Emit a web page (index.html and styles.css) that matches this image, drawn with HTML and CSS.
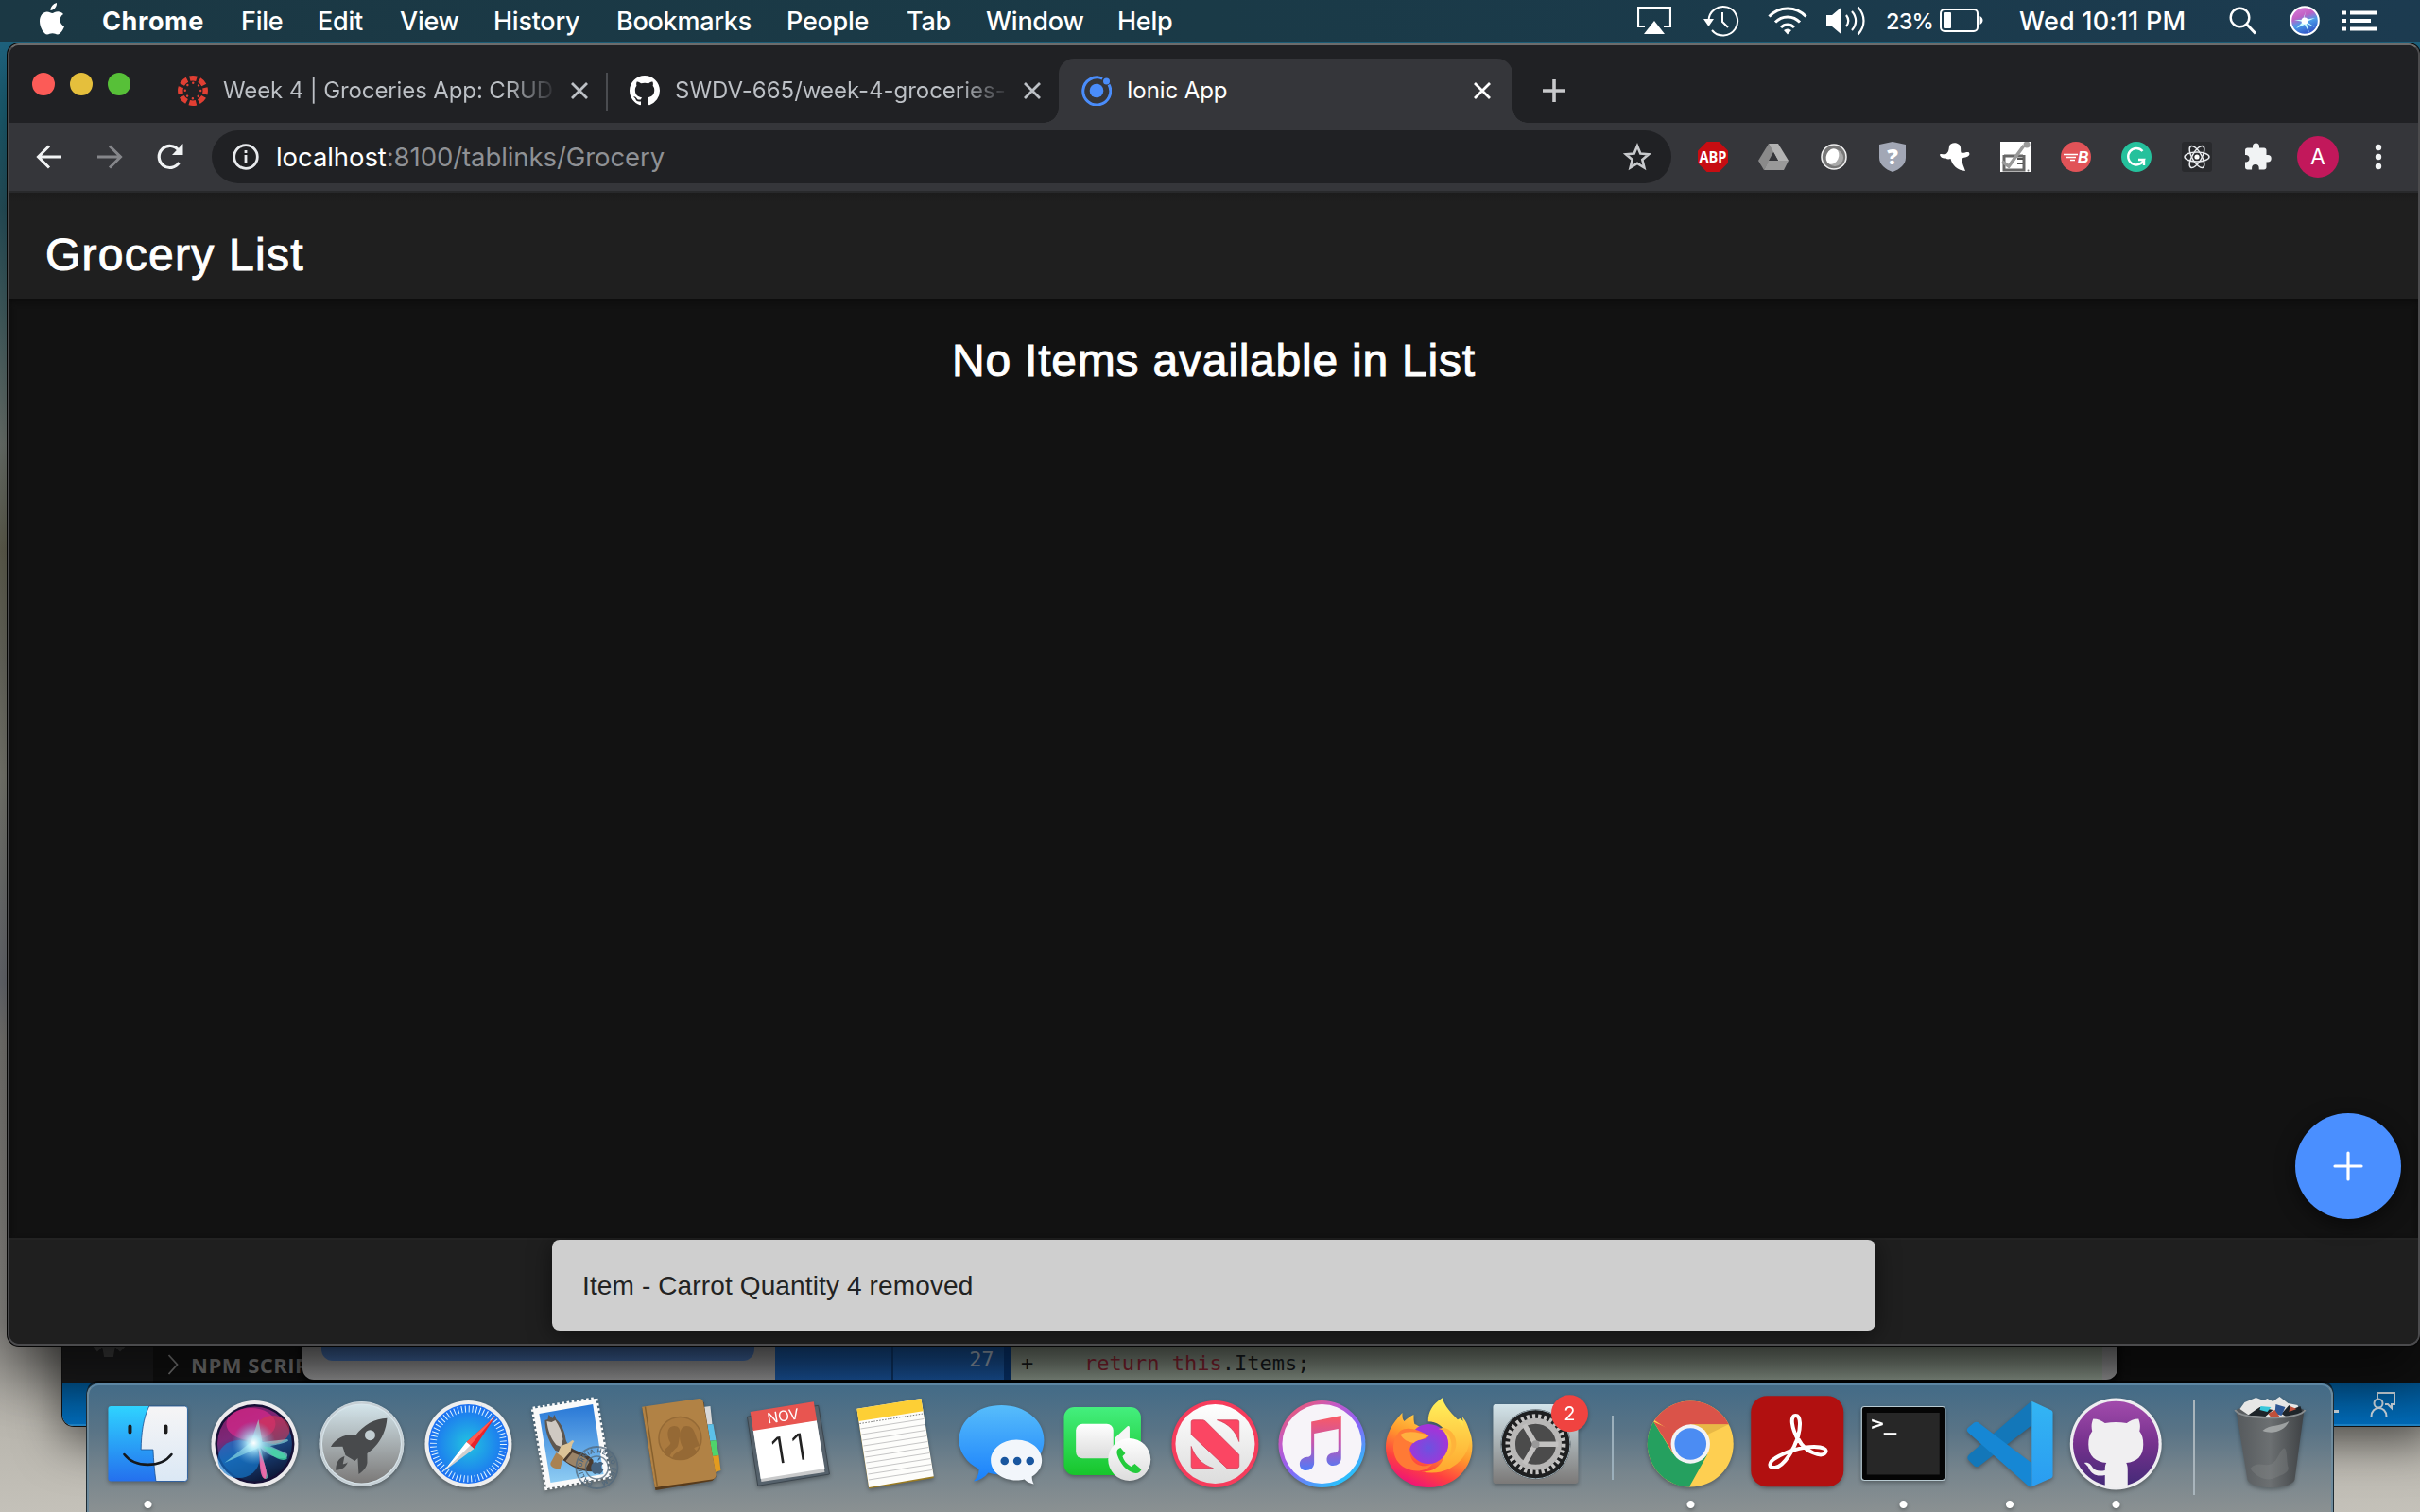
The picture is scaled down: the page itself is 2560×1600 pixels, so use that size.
FILE: index.html
```html
<!DOCTYPE html>
<html lang="en">
<head>
<meta charset="utf-8">
<title>Ionic App</title>
<link rel="stylesheet" href="styles.css">
</head>
<body>
<div class="desktop">

  <section class="window editor">
    <div class="editor-body">
      <div class="activity"><svg width="36" height="14" viewBox="0 0 36 14"><path d="M2 0l4 5 5-5M12 0l2 11h8l2-11M25 0l5 5 5-5" fill="#3a3a3a" stroke="#3a3a3a" stroke-width="2"/></svg></div>
      <div class="npm"><svg width="12" height="22" viewBox="0 0 12 22"><path d="M1.500 1l9 10-9 10" fill="none" stroke="#777" stroke-width="1.800"/></svg><span>NPM SCRIPTS</span></div>
    </div>
    <div class="editor-status"><i></i><svg width="28" height="28" viewBox="0 0 28 28" fill="none" stroke="#c3cdd4" stroke-width="2"><path d="M8 8V2h18v12h-3v4l-4-4h-3"/><circle cx="9" cy="13" r="4.500"/><path d="M1.500 27c0-12 16-12 16 0"/></svg></div>
  </section>

  <section class="window diff">
    <div class="side"><div class="button"></div></div>
    <div class="gutter"></div>
    <div class="gutter num">27</div>
    <div class="code"><span class="plus">+</span><span class="src"><b>return</b> <b>this</b>.Items;</span></div>
  </section>

  <main class="window browser">
    <div class="tabs">
      <div class="lights"><i class="red"></i><i class="yellow"></i><i class="green"></i></div>
      <div class="tab first">
        <svg width="32" height="32" viewBox="0 0 32 32"><circle cx="16" cy="16" r="13.200" fill="none" stroke="#e13f33" stroke-width="5.500" stroke-dasharray="7.400 2.967" stroke-dashoffset="3.700"/><circle cx="16" cy="16" r="8.200" fill="none" stroke="#e13f33" stroke-width="2.400" stroke-linecap="round" stroke-dasharray="0.100 6.340"/></svg>
        <span class="name t1">Week 4 | Groceries App: CRUD</span>
        <svg class="x" width="24" height="24" viewBox="0 0 24 24"><path d="M4 4l16 16M20 4L4 20"/></svg>
      </div>
      <div class="tab second">
        <svg width="32" height="32" viewBox="0 0 16 16"><path fill="#fff" d="M8 0C3.580 0 0 3.580 0 8c0 3.540 2.290 6.530 5.470 7.590.4.070.55-.17.55-.38 0-.19-.01-.82-.01-1.490-2.010.37-2.530-.49-2.690-.94-.09-.23-.48-.94-.82-1.130-.28-.15-.68-.52-.01-.53.63-.01 1.080.58 1.230.82.72 1.210 1.870.87 2.330.66.07-.52.28-.87.51-1.070-1.780-.2-3.640-.89-3.640-3.950 0-.87.31-1.590.82-2.150-.08-.2-.36-1.020.08-2.120 0 0 .67-.21 2.200.82.64-.18 1.320-.27 2-.27s1.360.09 2 .27c1.530-1.040 2.200-.82 2.200-.82.44 1.100.16 1.920.08 2.120.51.56.82 1.270.82 2.150 0 3.070-1.870 3.750-3.650 3.950.29.25.54.73.54 1.480 0 1.070-.01 1.930-.01 2.200 0 .21.15.46.55.38A8.010 8.010 0 0 0 16 8c0-4.420-3.580-8-8-8z"/></svg>
        <span class="name t2">SWDV-665/week-4-groceries-</span>
        <svg class="x" width="24" height="24" viewBox="0 0 24 24"><path d="M4 4l16 16M20 4L4 20"/></svg>
      </div>
      <div class="tab active">
        <svg width="32" height="32" viewBox="0 0 32 32" fill="#4a8dfb"><circle cx="16" cy="16" r="7.300"/><path d="M22.200 3.200A14.500 14.500 0 1 0 29 9.500" fill="none" stroke="#4a8dfb" stroke-width="3"/><circle cx="26.500" cy="6" r="3.500"/></svg>
        <span class="name t3">Ionic App</span>
        <svg class="x" width="24" height="24" viewBox="0 0 24 24"><path d="M4 4l16 16M20 4L4 20"/></svg>
      </div>
      <svg class="newtab" width="28" height="28" viewBox="0 0 28 28"><path d="M14 2v24M2 14h24" stroke="#c8c9cb" stroke-width="3.600"/></svg>
    </div>

    <div class="toolbar">
      <svg width="28" height="28" viewBox="0 0 28 28" fill="none" stroke="#f1f3f4" stroke-width="3"><path d="M27 14H3M14 2.500L2.500 14 14 25.500"/></svg>
      <svg width="28" height="28" viewBox="0 0 28 28" fill="none" stroke="#85868a" stroke-width="3"><path d="M1 14h24M14 2.500L25.500 14 14 25.500"/></svg>
      <svg width="28" height="28" viewBox="0 0 28 28"><path d="M23.500 20A11.500 11.500 0 1 1 23 7.200" fill="none" stroke="#f1f3f4" stroke-width="3.200"/><path d="M27.500 0v12H16z" fill="#f1f3f4"/></svg>
      <div class="omnibox">
        <svg width="28" height="28" viewBox="0 0 28 28"><circle cx="14" cy="14" r="12.300" fill="none" stroke="#e8eaed" stroke-width="2.800"/><path d="M14 12v9M14 7v3" stroke="#e8eaed" stroke-width="2.800"/></svg>
        <span class="url"><b>localhost</b>:8100/tablinks/Grocery</span>
        <svg class="star" width="30" height="30" viewBox="0 0 30 30"><path d="M15 3.500l3.300 8.100 8.700.7-6.700 5.700 2.100 8.500L15 21.900l-7.400 4.600 2.100-8.500L3 12.300l8.700-.7z" fill="none" stroke="#c8cacd" stroke-width="2.600"/></svg>
      </div>
      <div class="extensions">
        <svg viewBox="0 0 32 32"><path d="M9.500 0h13L32 9.500v13L22.500 32h-13L0 22.500v-13z" fill="#c70d12"/><text x="16" y="21.500" text-anchor="middle" class="abp" textLength="29" lengthAdjust="spacingAndGlyphs">ABP</text></svg>
        <svg viewBox="0 0 32 32"><path d="M11 2l5.500 9L6 30 0 20z" fill="#8a8a8a"/><path d="M11 2h10l11 18H21z" fill="#b3b3b3"/><path d="M11 20h21l-5 10H6z" fill="#999"/><path d="M16 11l5 9H11z" fill="#35363a"/></svg>
        <svg viewBox="0 0 32 32"><circle cx="16" cy="16" r="13" fill="#777" stroke="#eee" stroke-width="1.600"/><circle cx="17" cy="17" r="9" fill="#aaa"/><ellipse cx="14.500" cy="15.500" rx="6.500" ry="8.500" transform="rotate(25 14.500 15.500)" fill="#fff"/></svg>
        <svg viewBox="0 0 32 32"><path d="M14 0l14 3v14c0 7-6 12-14 15C6 29 0 24 0 17V3z" fill="#a2a7b5"/><text x="14" y="24" text-anchor="middle" class="q">?</text></svg>
        <svg viewBox="0 0 32 32"><path d="M10 5c1-5 11-5 12 1 .3 2 0 4 .5 5.500 3 .8 5-1 8-.5 2 2 .5 4-2 5-2 .8-4 .6-5 2-.5 4 2 8 3.500 13-8-.5-14-6-15.500-13-2 .8-4 .5-5-.5-3 .5-6.500-1.500-6.500-4 2-1.500 4 .5 6.500-.5C9.500 11 9.500 8 10 5z" fill="#fff"/></svg>
        <svg viewBox="0 0 32 32"><path fill="#fff" d="M0 0h32v32H0z"/><path d="M4 15h20M4 14v16h21V14" fill="none" stroke="#666" stroke-width="3"/><path d="M18 18h6M18 23h6" stroke="#555" stroke-width="2"/><path d="M2 21l7 5L25 4" fill="none" stroke="#999" stroke-width="3.500"/><circle cx="28" cy="3" r="3.500" fill="#999"/><circle cx="29.500" cy="30.500" r="1" fill="#777"/></svg>
        <svg viewBox="0 0 32 32"><circle cx="16" cy="16" r="16" fill="#e15358"/><path d="M3 13.500h15M6 16.500h10M10 19.500h5" stroke="#fff" stroke-width="1.700"/><text x="18" y="22" class="bee">B</text></svg>
        <svg viewBox="0 0 32 32"><circle cx="16" cy="16" r="16" fill="#25c19c"/><path d="M22.500 10A8.700 8.700 0 1 0 24 19h-6M24 18v7" fill="none" stroke="#fff" stroke-width="2.400"/></svg>
        <svg viewBox="0 0 32 32"><rect width="32" height="32" rx="3" fill="#292a2d"/><g fill="none" stroke="#e8eaed" stroke-width="1.500"><ellipse cx="16" cy="16" rx="13" ry="5"/><ellipse cx="16" cy="16" rx="13" ry="5" transform="rotate(60 16 16)"/><ellipse cx="16" cy="16" rx="13" ry="5" transform="rotate(120 16 16)"/></g><circle cx="16" cy="16" r="2.600" fill="#fff"/></svg>
        <svg viewBox="0 0 32 32"><path d="M3 9c0-1.500 1-2.500 2.500-2.500H11V5a3.500 3.500 0 0 1 7 0v1.500h5c1.500 0 2.500 1 2.500 2.500v5H27a3.700 3.700 0 0 1 0 7.400h-1.500v5.500c0 1.500-1 2.500-2.500 2.500h-5.300v-1.500a3.800 3.800 0 0 0-7.600 0v1.500H5.500C4 29.400 3 28.400 3 27v-5.500h1.300a3.800 3.800 0 0 0 0-7.500H3z" fill="#f1f3f4"/></svg>
        <span class="avatar">A</span>
        <svg viewBox="0 0 32 32" fill="#f1f3f4"><circle cx="16" cy="6" r="3.200"/><circle cx="16" cy="16" r="3.200"/><circle cx="16" cy="26" r="3.200"/></svg>
      </div>
    </div>

    <header class="app-header"><h1>Grocery List</h1></header>
    <div class="app-content">
      <h2>No Items available in List</h2>
      <button class="fab"><svg width="32" height="32" viewBox="0 0 32 32"><path d="M16 2v28M2 16h28" stroke="#fff" stroke-width="3.200" stroke-linecap="round"/></svg></button>
    </div>
    <footer class="app-footer"><div class="toast"><span>Item - Carrot Quantity 4 removed</span></div></footer>
  </main>

  <nav class="menubar">
    <svg class="apple" width="26" height="34" viewBox="0 0 26 34" fill="#fff"><path d="M18 0c.4 4-3 8-6.500 8C11 4.500 14.500.8 18 0zM25 12c-5 3-4.500 10.500 1 13-1.300 4-4.500 8.500-7 8.500-2 0-3-1.200-5.500-1.200S10 33.500 8 33.500C4.500 33.500 0 26 0 19.500 0 13 4 9.500 7.800 9.500c2.300 0 4.200 1.500 5.500 1.500s3.300-1.700 6-1.700c2.200 0 4.300 1 5.700 2.700z"/></svg>
    <b>Chrome</b><span>File</span><span>Edit</span><span>View</span><span>History</span><span>Bookmarks</span><span>People</span><span>Tab</span><span>Window</span><span>Help</span>
    <svg width="36" height="30" viewBox="0 0 36 30"><path d="M8 21H1V1h34v20h-7" fill="none" stroke="#fff" stroke-width="2.200"/><path d="M18 15l11 14H7z" fill="#fff"/></svg>
    <svg width="38" height="34" viewBox="0 0 38 34"><path d="M5.500 17A15.300 15.300 0 1 1 9 27" fill="none" stroke="#fff" stroke-width="2"/><path d="M0 15h11l-5.500 8z" fill="#fff"/><path d="M20 8v10l6 6" fill="none" stroke="#fff" stroke-width="2"/></svg>
    <svg width="42" height="30" viewBox="0 0 42 30" fill="none" stroke="#fff" stroke-width="3"><path d="M1.500 10.500C12-1 30-1 40.500 10.500M8 16.500c7-7.500 19-7.500 26 0M14 22c4-4 10-4 14 0"/><path d="M21 29.500l-4-4.500c2.500-2 5.500-2 8 0z" fill="#fff" stroke="none"/></svg>
    <svg width="42" height="32" viewBox="0 0 42 32"><path d="M0 10h6l10-8.500v29L6 22H0z" fill="#fff"/><path d="M21 10c3 4 3 8 0 12M27 6c5.500 6 5.500 14 0 20M33.500 1.500c8 9 8 20 0 29" fill="none" stroke="#fff" stroke-width="2.200"/></svg>
    <span class="percent">23%</span>
    <svg width="47" height="26" viewBox="0 0 47 26"><rect x="1" y="1" width="39" height="23" rx="4" fill="none" stroke="#fff" stroke-width="2"/><rect x="4" y="4" width="8" height="17" rx="1" fill="#fff"/><path d="M42.500 8c4 2 4 7 0 9z" fill="#fff"/></svg>
    <span class="clock">Wed 10:11 PM</span>
    <svg width="30" height="30" viewBox="0 0 30 30" fill="none" stroke="#fff"><circle cx="11.500" cy="11.500" r="9.800" stroke-width="2.400"/><path d="M18.500 18.500L28 28.500" stroke-width="3"/></svg>
    <svg width="32" height="32" viewBox="0 0 32 32"><defs><linearGradient id="orb" x1=".2" x2=".6" y2="1"><stop stop-color="#d77bd8"/><stop offset=".35" stop-color="#c060c4"/><stop offset=".6" stop-color="#4a9be8"/><stop offset="1" stop-color="#2d4dc4"/></linearGradient></defs><circle cx="16" cy="16" r="14.800" fill="url(#orb)" stroke="#fff" stroke-width="2"/><path d="M15 15l12-2-9 4 9 6-9-4 3 10-5-9-9 4 7-7-9-2 9 0 3-9z" fill="#c8fbff"/><circle cx="16" cy="16" r="3.500" fill="#fff"/></svg>
    <svg width="36" height="22" viewBox="0 0 36 22"><path d="M0 2.500h4M8 2.500h28M0 11h4M8 11h22M0 19.500h4M8 19.500h28" stroke="#fff" stroke-width="4"/></svg>
  </nav>

  <div class="dock">
    <svg class="app running" viewBox="0 0 112 136">
      <defs>
        <linearGradient id="finA" x2="0" y2="1"><stop stop-color="#2fd3ff"/><stop offset="1" stop-color="#2470ee"/></linearGradient>
        <linearGradient id="finB" x2="0" y2="1"><stop stop-color="#f6f5f6"/><stop offset="1" stop-color="#dbe8f5"/></linearGradient>
        <linearGradient id="grey" x2="0" y2="1"><stop stop-color="#d3e4ea"/><stop offset="1" stop-color="#7b7978"/></linearGradient>
        <radialGradient id="saf"><stop stop-color="#22c3e0"/><stop offset="1" stop-color="#1c6ff2"/></radialGradient>
        <linearGradient id="sky" x2="0" y2="1"><stop stop-color="#2877d6"/><stop offset="1" stop-color="#8fcdf3"/></linearGradient>
        <linearGradient id="msg" x2="0" y2="1"><stop stop-color="#57bdfb"/><stop offset="1" stop-color="#1a80fb"/></linearGradient>
        <linearGradient id="ft" x2="0" y2="1"><stop stop-color="#44ef7e"/><stop offset="1" stop-color="#17c52b"/></linearGradient>
        <linearGradient id="pale" x2="0" y2="1"><stop stop-color="#fff"/><stop offset="1" stop-color="#dcdcdc"/></linearGradient>
        <linearGradient id="mus" x2=".7" y2="1"><stop stop-color="#ff5a4c"/><stop offset=".35" stop-color="#c259c9"/><stop offset=".6" stop-color="#8b62f8"/><stop offset="1" stop-color="#22c7fc"/></linearGradient>
        <linearGradient id="note" x2="0" y2="1"><stop stop-color="#fb5a62"/><stop offset=".5" stop-color="#c455b0"/><stop offset="1" stop-color="#4d7bfa"/></linearGradient>
        <linearGradient id="fox" x1=".8" x2=".3" y2="1"><stop stop-color="#fff058"/><stop offset=".45" stop-color="#ff9a2c"/><stop offset=".75" stop-color="#ff4040"/><stop offset="1" stop-color="#ec0f7d"/></linearGradient>
        <linearGradient id="foxy" x2="0" y2="1"><stop stop-color="#fff25c"/><stop offset="1" stop-color="#ffa52e"/></linearGradient>
        <radialGradient id="globe" cx=".5" cy=".6"><stop stop-color="#6b53e0"/><stop offset="1" stop-color="#a235d8"/></radialGradient>
        <linearGradient id="vs" x2="0" y2="1"><stop stop-color="#33b5f4"/><stop offset="1" stop-color="#2a9cf0"/></linearGradient>
        <linearGradient id="git" x2="0" y2="1"><stop stop-color="#a24bac"/><stop offset=".5" stop-color="#75318d"/><stop offset="1" stop-color="#432a77"/></linearGradient>
        <linearGradient id="can"><stop stop-color="#55595c"/><stop offset=".5" stop-color="#6c7072"/><stop offset="1" stop-color="#3e4144"/></linearGradient>
      </defs>
      <rect x="14" y="24" width="84" height="79.500" rx="3" fill="url(#finA)"/><path d="M57.300 24H95a3 3 0 0 1 3 3v73.500a3 3 0 0 1-3 3H64.500c-1.500-11-2.500-22-3-33.500H48.700C49 53 51 37 57.300 24z" fill="url(#finB)" stroke="#1b4f8f" stroke-width=".8"/><path d="M37 45.500v6M75 45.500v6" stroke="#1b1b1b" stroke-width="4" stroke-linecap="round"/><path d="M31 75c11 14.500 39 14.500 50 0" fill="none" stroke="#15181c" stroke-width="2.600" stroke-linecap="round"/>
    </svg>
    <svg class="app" viewBox="0 0 112 136"><defs>
      <linearGradient id="sb" x1=".2" x2=".6" y2="1"><stop stop-color="#7b1c63"/><stop offset=".35" stop-color="#7c2878"/><stop offset=".6" stop-color="#1c4a86"/><stop offset="1" stop-color="#0d1838"/></linearGradient>
      <radialGradient id="glow"><stop stop-color="#fff"/><stop offset=".3" stop-color="#bdf4ff" stop-opacity=".85"/><stop offset="1" stop-color="#6ad" stop-opacity="0"/></radialGradient></defs>
      <circle cx="56" cy="64" r="46" fill="#eceaec"/><circle cx="56" cy="64" r="42" fill="#161036"/><circle cx="56" cy="64" r="39.500" fill="url(#sb)"/><ellipse cx="52" cy="43" rx="26" ry="17" fill="#e22a8e" opacity=".65"/><ellipse cx="75" cy="49" rx="18" ry="15" fill="#d23750" opacity=".6"/><ellipse cx="39" cy="80" rx="22" ry="20" fill="#1479cf" opacity=".65"/><path d="M24 84L52 62l8-24 4 24 26-3c8 3-18 7-18 7l18 8c5 8-16 7-28-6l8 31c-6 10-8-20-10-31z" fill="#a5f5e9" opacity=".55"/><path d="M60 67c3 12 12 26 7 34-7-2-5-22-7-34z" fill="#f767ab" opacity=".9"/><path d="M64 66c14 2 28 9 26 14-8 4-19-6-26-14z" fill="#44dba5" opacity=".8"/><circle cx="55" cy="63" r="23" fill="url(#glow)"/>
    </svg>
    <svg class="app" viewBox="0 0 112 136"><circle cx="56" cy="64" r="45" fill="#d9e6ec"/><circle cx="56" cy="64" r="41.500" fill="url(#grey)"/><circle cx="56" cy="64" r="43.500" fill="none" stroke="#b9c0c4" stroke-width="2" opacity=".6"/><path d="M83 36.700C70 37 58 44 50 54.500c-10-2-21 3-26.500 12.500L36 66.700l3 9.300 10 6 3-3 1 17c6-4 8.500-8 9-12v-10c12-8 20-22 21-37.300z" fill="#484a4c"/><circle cx="65" cy="54.700" r="5.500" fill="#c3ced2"/><path d="M38 77c-7 2-9 8-9.300 14.700 6 0 11-3 12.600-8.400-2 2-5 2-5 2z" fill="#484a4c"/></svg>
    <svg class="app" viewBox="0 0 112 136"><circle cx="56" cy="64" r="46" fill="#eee"/><circle cx="56" cy="64" r="42" fill="url(#saf)"/><circle cx="56" cy="64" r="37" fill="none" stroke="#e2f5ff" stroke-width="7" stroke-dasharray="1 2.875"/><path d="M84.500 35L62 69l-8-7z" fill="#e8232b"/><path d="M84.500 35L54 62l4 3.500z" fill="#ff5b50"/><path d="M30 93l32-24-8-7z" fill="#cfcfcf"/><path d="M30 93l24-31 4 3.500z" fill="#fff"/></svg>
    <svg class="app" viewBox="0 0 112 136"><path d="M11.300 26.700L78 16l14.300 82.700-66.600 12.300z" fill="#fafafa" stroke="#fafafa" stroke-width="4" stroke-dasharray="2.600 2.600"/><path d="M18 32l56.700-10L86 96l-56 9z" fill="url(#sky)"/>
      <path d="M24 39l3-1 1-5 4 4 2-4 2 5c6 5 9 13 10 21 1 4 3 6 7 7l-12 7-6-2C29 63 24 51 24 39z" fill="#5e5750"/><path d="M26 40l5 1 4-2c4 6 7 12 8 20l-2 8-5-2C30 58 27 49 26 40z" fill="#cfc9c2"/><path d="M52 68c6 5 16 5 23 13l1 12c-12 1-23-4-33-12z" fill="#4a3b2f"/><path d="M53 73c7 3 13 4 18 10l-4 7c-9-1-16-4-21-8z" fill="#9b8468"/><path d="M41 66l8-3 4-3 2 1-2 3-2 8-8 9-7-3z" fill="#dcc397"/><path d="M36 73l8 6c-2 4-3 8-4 12-6-1-11-3-10-7z" fill="#a98252"/>
      <g fill="none" stroke="#52687b" opacity=".75"><circle cx="79" cy="89" r="22" stroke-width="1.800"/><circle cx="79" cy="89" r="12" stroke-width="1.500"/><path id="ring" stroke="none" d="M79 104.500a15.500 15.500 0 1 1 .1 0"/></g><text class="stamp" textLength="88"><textPath href="#ring" startOffset="4">CALIFORNIA HELLO FROM</textPath></text><path d="M80 82c2-1 3-3 3-4-2 0-3 2-3 4zm-6 3c-3 5 0 10 3 11 2-1 3-1 5 0 2-1 3-3 4-5-3-1-3-5 0-6-2-3-5-2-6-1-2-1-4-1-6 1z" fill="#45627f"/></svg>
    <svg class="app" viewBox="0 0 112 136"><path d="M79 25l8-1 2 19-7 1z" fill="#d8d8d8"/><path d="M82 44l8-1 3 17-8 1z" fill="#5cc0e8"/><path d="M86 61l7-1 3 16-7 1z" fill="#4fd46b"/><path d="M89 77l7-1 2 16-6 2z" fill="#e39b1f"/><path d="M15 26l61-9 4 3 13 79-4 4-60 10z" fill="#573a1b"/><path d="M14.700 24.700L75 16c3 0 4 1 4.500 4L93 96c0 3-1 5-4 5.500L28.300 110z" fill="#b18245"/><path d="M18 24.500l13 85" stroke="#86602e" stroke-width="1.500"/><circle cx="55" cy="58" r="22.500" fill="#aa7a3f" stroke="#956a36" stroke-width="1.500"/><path d="M38 73c0-5 6-6 7-10-5-8-4-18 4-18 6 0 7 6 5 14-1 6-1 8-4 10-3 3-6 6-6 9-3-1-5-3-6-5z" fill="#956935"/><path d="M47 79c0-6 9-7 11-11-5-8-5-23 4-23 9 0 9 12 14 21-3 1-6 1-6 3 2 2 3 3 3 4-6 7-18 9-26 6z" fill="#956935"/></svg>
    <svg class="app" viewBox="0 0 112 136"><path d="M13 35.300l75.300-12L100 96l-75.700 12.300z" fill="#56626c" stroke="#3c464e"/><path d="M19.300 49l67-10L95 94l-67 10z" fill="#c9cacb"/><path d="M19.300 49l67-10L95 90l-67.700 11z" fill="#fff"/><path d="M16.300 30l67-10.700 3.400 20-67.400 10.700z" fill="#e85550"/><text class="month" x="51" y="40" transform="rotate(-9 51 35)" text-anchor="middle">NOV</text><text class="day" x="57" y="83" transform="rotate(-9 57 69)" text-anchor="middle" textLength="37">11</text></svg>
    <svg class="app" viewBox="0 0 112 136"><path d="M16 27.700l68-10.700 13.300 83-68.600 11.300z" fill="#9a7b22"/><path d="M16 26.700L84 16l13.300 82.300L28.700 110z" fill="#fdfdfb"/><path d="M16 26.700L84 16l2 13.300L18 40z" fill="#fdcf35"/><path d="M19 42.500l67-10.500" stroke="#777" stroke-dasharray="1.500 1.500"/><path d="M20 48l67-10.500M21 54l67-10.500M22 60l67-10.500M23 66l67-10.500M24 72l67-10.500M25 78l67-10.500M26 84l67-10.500M27 90l67-10.500M28 96l67-10.500M28.500 102l67-10.500" stroke="#c6c6c6"/></svg>
    <svg class="app" viewBox="0 0 112 136"><path d="M56 23c25 0 45 16 45 37S81 96.500 56 96.500c-5 0-10-.7-14-2-4 5-9 8-15.500 9 4-4 6-8 5.500-13C19 84 11 72 11 60c0-21 20-37 45-37z" fill="url(#msg)"/><path d="M71.700 59.500c15 0 27 9.500 27 22 0 7-4 13-10.500 17 0 3 .5 5 2 8-5-1-8-3-10-5-3 .7-5 1-8.500 1-15 0-27-9-27-21s12-22 27-22z" fill="#f2f6fb"/><g fill="#19569f"><circle cx="59.300" cy="82" r="4.300"/><circle cx="72.700" cy="82" r="4.300"/><circle cx="86.300" cy="82" r="4.300"/></g></svg>
    <svg class="app" viewBox="0 0 112 136"><rect x="9" y="25" width="81.500" height="72" rx="11" fill="url(#ft)"/><rect x="21.700" y="42.700" width="39.600" height="36.500" rx="7" fill="url(#pale)"/><path d="M63.500 57L76 45.500c2-1 2.500 0 2.500 2V75c0 2-1 2.500-3 1L63.500 66z" fill="#f6f6f6"/><circle cx="78.300" cy="80.500" r="22.500" fill="url(#pale)"/><path d="M69 68c-4 1-5 4-3 9 3 8 8 14 15 17 5 2 8 1 10-3l-7-6-4 3c-5-3-8-7-9-11l3-3z" fill="#23cb3b"/></svg>
    <svg class="app" viewBox="0 0 112 136"><circle cx="56" cy="64" r="46" fill="#f63c5c"/><circle cx="56" cy="64" r="42" fill="url(#pale)"/><g fill="#fb4663" stroke="#ce3a52" stroke-width=".7"><path d="M33 38.700h9c2 0 3 .5 4.500 2L81.300 75.300V87c0 2-1 2.700-2.700 2.700H68.500L30.700 54V41c0-1.500.8-2.300 2.300-2.300z"/><path d="M58 38.700h21c1.500 0 2.300.8 2.300 2.300v20.500C78 51 70 42 58 38.700z"/><path d="M30.700 66.500C34 77 42 86 54 89.700H33c-1.500 0-2.300-.8-2.300-2.300z"/></g></svg>
    <svg class="app" viewBox="0 0 112 136"><circle cx="56" cy="64" r="46" fill="url(#mus)"/><circle cx="56" cy="64" r="42" fill="#f7f4f9"/><path d="M44.700 40.500L76.300 34v45c0 5-4 8-8.500 8-9 0-9-13 0-13.500 3-.3 5.500-1 5.500-4V48l-25.600 5v31c0 5-4 8-8.500 8-9 0-9-13 0-14 3-.3 5.500-1 5.500-4z" fill="url(#note)"/></svg>
    <svg class="app" viewBox="0 0 112 136"><path d="M28 31c0 4 0 7 2 9 3-3 6-5 10-7 0 4 0 7 1 10 5 2 11 6 15 12l33-18c9 7 13 17 13 29 0 25-20 44-46 44S10.500 91 10.500 67c0-13 7-25 17.500-36z" fill="url(#fox)"/><path d="M70.300 15.300c-11 7-15 15-15 25 9 0 16 5 19 12l-3 28c-4 8-12 14-23 13 25 6 46-10 50-28 3-12-1-24-7-30 1 4 1 8 1 11-6-11-18-17-22-31z" fill="url(#foxy)"/><circle cx="55.700" cy="64" r="21" fill="url(#globe)"/><path d="M26 50c8-5 19-1 30 5-1 3-5 4-12 5-9 4-10 11-6 20 5 8 14 9 22 5-9 12-30 9-38-4-6-11-4-23 4-31z" fill="#ff7a35"/><path d="M26 54c9-5 20-2 30 1-6 5-12 4-16 8-5-1-11-3-14-9z" fill="#ffb13f"/><path d="M66 48c15 2 18 22 9 32 16-9 11-31-3-33z" fill="#ffb33a"/></svg>
    <svg class="app" viewBox="0 0 112 136"><rect x="11" y="22" width="90" height="84" rx="3" fill="url(#grey)"/><circle cx="56" cy="64.300" r="37" fill="#1e1f20"/><circle cx="56" cy="64.300" r="36.500" fill="none" stroke="#9fb1ba" stroke-width="1"/><circle cx="56" cy="64.300" r="29.500" fill="none" stroke="#c6c5c4" stroke-width="5" stroke-dasharray="3.200 2.950"/><circle cx="56" cy="64.300" r="24.500" fill="#4b4b4b" stroke="#b8b7b6" stroke-width="6"/><path d="M56 64.300L80 64.300M56 64.300L44 43.500M56 64.300L44 85" stroke="#c2c1c0" stroke-width="5.500"/><circle cx="56" cy="64.300" r="4" fill="#999"/><circle cx="92" cy="31.700" r="19.500" fill="#f04340"/><text class="badge" x="92" y="39" text-anchor="middle">2</text></svg>
    <i class="line"></i>
    <svg class="app apps2 running" viewBox="0 0 112 136"><circle cx="56" cy="64" r="45.500" fill="#fecf51"/><path d="M56 64L18 39a45.500 45.500 0 0 1 78.500 4.300H56z" fill="#da5349"/><path d="M17 40.500A45.500 45.500 0 0 0 54.700 109.500L74 75 38 75z" fill="#25a05f"/><path d="M17 40.500L38 74V50z" fill="#da5349"/><path d="M56 43.300h40.500L74 54z" fill="#d9a83f" opacity=".6"/><circle cx="56" cy="64" r="20.700" fill="#f3f3f5"/><circle cx="56" cy="64" r="16.800" fill="#4b8cf3"/></svg>
    <svg class="app apps2" viewBox="0 0 112 136"><rect x="7" y="13.300" width="98" height="96" rx="17" fill="#b11010"/><path d="M57 60C50 47 48 34 54.300 34c6 0 5 13 2.500 22-4 13-14 31-24 33-8 1-7-6 0-10 11-7 28-12 41-12 10 0 14 3 12 6-4 6-22-1-28-13z" fill="none" stroke="#fff" stroke-width="4"/></svg>
    <svg class="app apps2 running" viewBox="0 0 112 136"><rect x="12" y="24.500" width="88.500" height="78" rx="3" fill="#050505" stroke="#b9cbd3" stroke-width="1.200"/><rect x="17.500" y="31" width="77" height="65.500" fill="#272727"/><text class="prompt" x="22" y="49" textLength="27" lengthAdjust="spacingAndGlyphs">&gt;_</text></svg>
    <svg class="app apps2 running" viewBox="0 0 112 136"><path d="M78.300 19L13 75c-2 2-2.500 4-1 6l6 6c2 2 4 1.500 6 0l55-42.700z" fill="#1377b9"/><path d="M79 109.300c-2 .5-3 0-5-2L12 52c-2-2-2-4 0-5.500l6-5c2-1 3.500-1 5.500.5L79 84.300z" fill="#1687d4"/><path d="M79 18.700l20.500 9.500c1.300.7 1.800 1.500 1.800 3v66c0 1.500-.5 2.300-1.800 3L79 109.300z" fill="url(#vs)"/></svg>
    <svg class="app apps2 running" viewBox="0 0 112 136"><circle cx="56" cy="64" r="48.500" fill="#eeedf0"/><circle cx="56" cy="64" r="45.300" fill="url(#git)"/><path d="M32 37.500c5 0 9 2 12.500 4.500 8-1.500 15-1.500 23 0C71 39.500 75 37.500 80 37.500c2 5 2 9 1 13 3 4 4 8 4 14 0 13-7 18.500-18 19.500 1 2 1.500 4 1.500 7v17c-8 3-17 3-24 0V97c-9 2-14-1-17-7-1-3-3-4-5-6 5-1 7 2 9 5 3 4 8 4 13 3 0-3 0-6 1.500-8C35 83 27 77.500 27 64.500c0-6 1-10 4-14-1-4-1-8 1-13z" fill="#f0eff1"/></svg>
    <i class="line tall"></i>
    <svg class="app bin" viewBox="0 0 112 136"><path d="M20 28c20-8 52-8 72 0L82 102c-4 11-46 11-50 0z" fill="url(#can)"/><path d="M24 27l5-7 12-5 8 3 4-2 6 3 7-5 9 7 10 2 3 7-14 6H37z" fill="#e7e7e6"/><path d="M32 34l13-9 14 3-8 7zM68 32l8-9 4 4 8-3 2 7-16 5z" fill="#1e2429"/><path d="M46 24l11 1-4 5-8-2z" fill="#38c7da"/><path d="M62 22l10 3-4 9-7-2z" fill="#2f5794"/><path d="M54 32l7-4 5 7-9 1zM77 24l7 3-8 3z" fill="#c0503b"/><path d="M19 28c4 11 70 11 74 0" fill="none" stroke="#888d90" stroke-width="2"/><path d="M48 50c8-7 18-4 28-10-5 11-18 14-28 10z" fill="#aeb1b2" opacity=".8"/><path d="M35 90c10-12 20 6 30-14s8 5 10 12-8 9-14 12-18 2-26-10z" fill="#8b8e90" opacity=".3"/></svg>
  </div>
</div>
</body>
</html>
```
FILE: styles.css
```css
* { box-sizing: border-box; }
body { margin: 0; }
.desktop {
  position: relative; width: 2560px; height: 1600px; overflow: hidden;
  font-family: Inter, "Liberation Sans", sans-serif; color: #fff;
  background: linear-gradient(#1f6480 44px, #1e6a80 120px, #2b5b68 220px, #4b6b6e 330px, #7a827c 470px, #6c6b59 580px, #77776c 700px, #8a8a80 820px, #74777e 1040px, #85837f 1100px, #95938f 1400px, #b9b6ae 1510px, #c4c1b9);
}
svg { display: block; flex: none; }
.window { position: absolute; overflow: hidden; }

/* menu bar */
.menubar {
  position: absolute; inset: 0 0 auto; height: 44px; padding-left: 42px;
  display: grid; align-items: center; justify-content: start;
  grid-template-columns: 66px 147px 81px 87px 99px 130px 180px 127px 84px 139px 550px 70px 68px 62px 63px 57px 85px 221px 64px 56px 40px;
  background: linear-gradient(90deg, #1b3844, #1a3a47 50%, #1c3b50);
  font-size: 27px; font-weight: 500; letter-spacing: -.25px; white-space: nowrap;
}
.menubar b { font-weight: 700; letter-spacing: .6px; }
.menubar .apple { margin-top: -4px; }
.percent { font-size: 23.500px; letter-spacing: -.8px; }
.clock { letter-spacing: .2px; margin-left: -1px; }

/* windows behind the browser */
.editor { left: 66px; top: 1300px; width: 2510px; height: 209px; border-radius: 0 0 0 12px; box-shadow: 0 0 0 1px #111, 0 16px 50px rgba(0,0,0,.6); display: flex; flex-direction: column; }
.editor-body { flex: 1; display: flex; background: #101010; }
.activity { width: 96px; background: #1a1a1b; padding: 124px 0 0 31px; }
.npm { display: flex; align-items: center; gap: 13px; height: 40px; margin-top: 124px; padding-left: 15px; color: #777; font: 700 22px "Open Sans", sans-serif; letter-spacing: .5px; white-space: nowrap; }
.editor-status { height: 45px; background: linear-gradient(#00528c, #0069b5); border-bottom: 2px solid #1d81c4; display: flex; justify-content: flex-end; align-items: center; gap: 34px; padding-right: 41px; }
.editor-status i { width: 12px; height: 3px; margin: 16px -1px 0 0; background: #c3cdd4; }
.diff { left: 320px; top: 1360px; width: 1920px; height: 100px; border-radius: 12px; display: flex; background: linear-gradient(#6d6d6e 64px, #969697); box-shadow: 0 0 0 1px #050505, 0 4px 12px #000; padding-right: 16px; }
.side { width: 500px; padding: 0 22px 20px 20px; display: flex; }
.button { flex: 1; border-radius: 12px; background: linear-gradient(#2e4a74 80%, #3c5f93); }
.gutter { width: 125px; background: linear-gradient(#123f75 60%, #19539b); border-right: 2px solid #0c3262; }
.num { width: 125px; border-right: 8px solid #08326b; padding: 64px 11px 0 0; text-align: right; font: 22px/30px "DejaVu Sans Mono", monospace; color: #8f9caa; letter-spacing: -.4px; }
.code { flex: 1; display: flex; padding: 68px 0 0 10px; background: linear-gradient(#62695f 64px, #8b978b); font: 22px/30px "DejaVu Sans Mono", monospace; color: #14181b; white-space: pre; }
.code b { font-weight: 400; color: #78202c; }
.plus { width: 67px; }

/* browser window */
.browser { left: 8px; top: 46px; width: 2552px; height: 1378px; border: 2px solid #4b4b4d; border-top-color: #6c6c6c; border-radius: 12px; background: #202124; box-shadow: 0 0 0 1px #050505, 0 30px 60px rgba(0,0,0,.55); display: flex; flex-direction: column; }
.tabs { height: 82px; display: flex; align-items: flex-end; background: #202124; }
.lights { display: flex; gap: 16px; padding-left: 24px; width: 154px; height: 53px; }
.lights i { width: 24px; height: 24px; border-radius: 50%; }
.red { background: #fc5b57; } .yellow { background: #e5bf3c; } .green { background: #57c038; }
.tab { height: 68px; display: flex; align-items: center; gap: 16px; font-size: 24px; color: #bdc1c6; }
.name { flex: 1; white-space: nowrap; padding-bottom: 1px; }
.first { width: 479px; padding: 0 19px 0 24px; position: relative; }
.first::after { content: ""; position: absolute; right: 0; top: 15px; width: 2px; height: 40px; background: #4a4c50; }
.second { width: 477px; padding: 0 18px 0 23px; }
.first .name, .second .name { color: transparent; background: linear-gradient(90deg, #bdc1c6 calc(100% - 50px), #303135); background-clip: text; -webkit-background-clip: text; }
.active { width: 480px; padding: 0 20px 0 24px; background: #35363a; color: #fff; border-radius: 16px 16px 0 0; position: relative; }
.active::before, .active::after { content: ""; position: absolute; bottom: 0; width: 16px; height: 16px; }
.active::before { left: -16px; background: radial-gradient(circle at 0 0, transparent 15.500px, #35363a 16px); }
.active::after { right: -16px; background: radial-gradient(circle at 100% 0, transparent 15.500px, #35363a 16px); }
.x { fill: none; stroke: currentColor; stroke-width: 2.800; }
.newtab { margin: 0 0 20px 30px; }
.t1 { letter-spacing: -.12px; } .t2 { letter-spacing: -.02px; } .t3 { letter-spacing: -.1px; }
.toolbar { height: 74px; display: flex; align-items: center; gap: 36px; padding-left: 28px; background: #35363a; border-bottom: 2px solid #28292b; }
.omnibox { width: 1544px; height: 56px; margin-left: -6px; border-radius: 28px; background: #202124; display: flex; align-items: center; padding: 0 21px 0 22px; gap: 18px; }
.url { flex: 1; font-size: 27.500px; color: #8f9195; letter-spacing: -.08px; }
.url b { font-weight: 400; color: #fff; }
.extensions { display: flex; align-items: center; gap: 32px; margin-left: -8px; }
.extensions svg { width: 32px; height: 32px; }
.abp { font: 700 15.500px "Open Sans"; fill: #fff; }
.q { font: 800 23px "Open Sans"; fill: #fff; }
.bee { font: italic 700 16px "Liberation Sans"; fill: #fff; }
.avatar { width: 44px; height: 44px; margin: 0 -6px; border-radius: 50%; background: #c2185b; font-size: 23px; line-height: 44px; text-align: center; }

/* app */
h1, h2 { margin: 0; font: 400 48px/56px "Liberation Sans", sans-serif; -webkit-text-stroke: 1px #fff; white-space: nowrap; }
h1 { letter-spacing: 1.250px; }
h2 { letter-spacing: .78px; }
.app-header { height: 112px; padding: 38px 38px 0; background: linear-gradient(#1c1c1c, #1f1f1f 10px); }
.app-content { flex: 1; background: #121212; display: flex; flex-direction: column; align-items: center; padding-top: 38px; position: relative; box-shadow: inset 0 3px 6px #0c0c0c; }
.fab { position: absolute; right: 18px; bottom: 20px; width: 112px; height: 112px; border: 0; border-radius: 50%; background: #4a8fff; display: grid; place-items: center; padding: 0; box-shadow: 0 6px 20px rgba(0,0,0,.5); }
.app-footer { height: 112px; background: #1f1f1f; border-top: 2px solid #232323; display: flex; justify-content: center; }
.toast { width: 1400px; height: 96px; border-radius: 8px; background: #cfcfcf; color: #222; display: flex; align-items: center; padding: 1px 0 0 32px; font: 28px "Liberation Sans", sans-serif; letter-spacing: .13px; box-shadow: 0 4px 24px rgba(0,0,0,.5); }

/* dock */
.dock {
  position: absolute; left: 92px; top: 1464px; width: 2376px; height: 144px; padding-left: 6px;
  border: 2px solid #6d8a9c; border-color: #5d86a3 #6d8a9c; border-bottom: 0; border-radius: 12px 12px 0 0;
  box-shadow: 0 0 0 1px #1c2a33, 0 -3px 0 rgba(0,0,0,.6);
  background: linear-gradient(#436b87, #5a7486 35%, #77858d 65%, #8b9192 95%);
  display: flex;
}
.app { width: 112.900px; height: 136px; margin-top: -2px; filter: drop-shadow(0 2px 2px rgba(0,0,0,.3)); }
.apps2 { width: 112.500px; }
.bin { margin-left: -3px; }
.running { background: radial-gradient(circle at 50% 128px, #fff 3.500px, transparent 4.500px); }
.line { width: 2px; height: 68px; margin: 32px 25px 0 25px; background: #9bafbb; }
.tall { height: 100px; margin: 16px 26px 0 25px; background: #a9b5bc; }
.stamp { font: 700 6.500px Inter; fill: #52687b; }
.month { font: 400 15.500px Inter; fill: #fff; }
.day { font: 300 39px Inter; fill: #222; }
.badge { font: 400 20px Inter; fill: #fff; }
.prompt { font: 700 19px "DejaVu Sans Mono"; fill: #fff; }
```
